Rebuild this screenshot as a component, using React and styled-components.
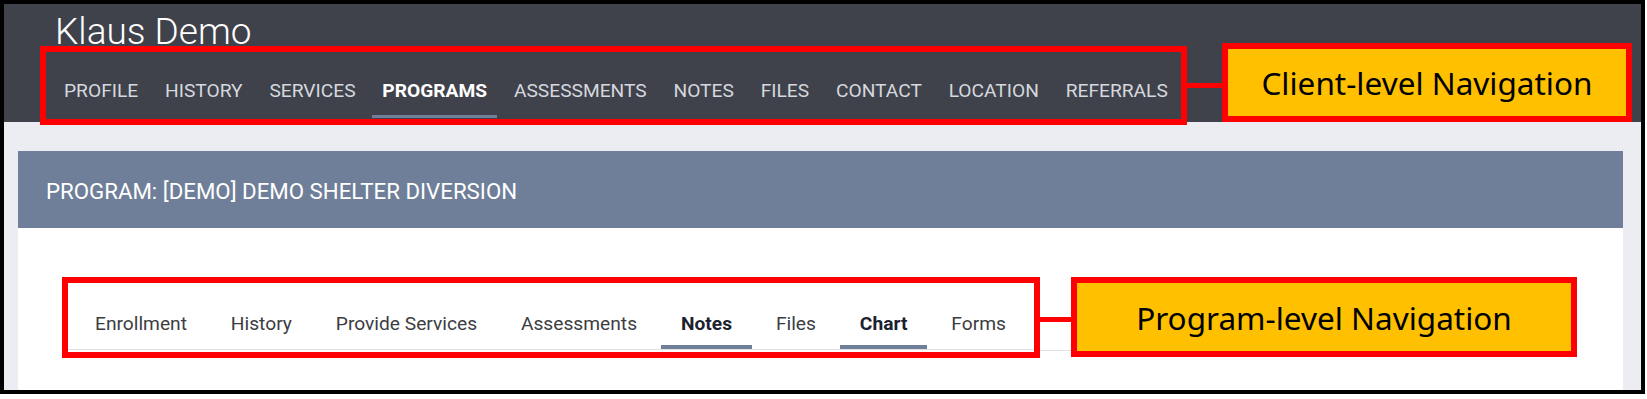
import styled, { createGlobalStyle } from "styled-components";

const GlobalStyle = createGlobalStyle`
  body {
    margin: 0;
    background: #fff;
  }
`;

const CLIENT_TABS = ["Profile", "History", "Services", "Programs", "Assessments", "Notes", "Files", "Contact", "Location", "Referrals"];
const PROGRAM_TABS = ["Enrollment", "History", "Provide Services", "Assessments", "Notes", "Files", "Chart", "Forms"];
const PROGRAM_ACTIVE = ["Notes", "Chart"];

const App = () => (
  <>
    <GlobalStyle />
    <Frame>
      <Header>
        <ClientName>Klaus Demo</ClientName>
        <CalloutRow>
          <Outline $width={1147} $height={79} $offset={3}>
            <ClientNav>
              {CLIENT_TABS.map((t) => (
                <ClientTab key={t} $active={t === "Programs"}>
                  {t}
                </ClientTab>
              ))}
            </ClientNav>
          </Outline>
          <Connector $width={35} />
          <Label $width={410} $height={79}>
            Client-level Navigation
          </Label>
        </CalloutRow>
      </Header>

      <Main>
        <Card>
          <CardHeader>Program: [DEMO] Demo Shelter Diversion</CardHeader>
          <CardBody>
            <CalloutRow>
              <Outline $width={978} $height={81}>
                <ProgramNav>
                  {PROGRAM_TABS.map((t) => (
                    <ProgramTab key={t} $active={PROGRAM_ACTIVE.includes(t)}>
                      {t}
                    </ProgramTab>
                  ))}
                </ProgramNav>
              </Outline>
              <Connector $width={31} $rule />
              <Label $width={506} $height={80}>
                Program-level Navigation
              </Label>
            </CalloutRow>
          </CardBody>
        </Card>
      </Main>
    </Frame>
  </>
);
export default App;

const Frame = styled.div`
  box-sizing: border-box;
  width: 1645px;
  height: 394px;
  border: 4px solid #000;
  background: #ecedf2;
  overflow: hidden;
  display: flex;
  flex-direction: column;
  font-family: Roboto, "Liberation Sans", sans-serif;
`;

const Header = styled.header`
  position: relative;
  z-index: 1;
  flex: none;
  height: 118px;
  padding-top: 13px;
  box-sizing: border-box;
  background: #3f424b;
  display: flex;
  flex-direction: column;
`;

const ClientName = styled.h1`
  margin: 0 0 0 51px;
  font-size: 37px;
  font-weight: 300;
  line-height: 30px;
  color: #fff;
`;

const CalloutRow = styled.div`
  display: flex;
  align-items: flex-start;

  ${Header} & {
    margin: -4px 0 0 36px;
  }
`;

const Outline = styled.div`
  box-sizing: border-box;
  flex: none;
  width: ${({ $width }) => $width}px;
  height: ${({ $height }) => $height}px;
  margin-top: ${({ $offset = 0 }) => $offset}px;
  border: 6px solid #ff0000;
  overflow: hidden;
`;

const Connector = styled.div`
  position: relative;
  flex: none;
  align-self: stretch;
  width: ${({ $width }) => $width}px;

  &::before {
    content: "";
    position: absolute;
    left: 0;
    right: 0;
    top: 50%;
    height: 5px;
    margin-top: -1px;
    background: #ff0000;
  }

  &::after {
    content: "";
    display: ${({ $rule }) => ($rule ? "block" : "none")};
    position: absolute;
    left: 0;
    right: 0;
    bottom: 7px;
    height: 1px;
    background: #dfe1e6;
  }
`;

const Label = styled.div`
  box-sizing: border-box;
  flex: none;
  width: ${({ $width }) => $width}px;
  height: ${({ $height }) => $height}px;
  border: 6px solid #ff0000;
  background: #ffc000;
  display: flex;
  align-items: center;
  justify-content: center;
  font-family: "Noto Sans", "Open Sans", sans-serif;
  font-size: 31.5px;
  color: #000;
  white-space: nowrap;
`;

const ClientNav = styled.nav`
  display: flex;
  gap: 6.8px;
  padding: 10px 0 0 8px;
`;

const ClientTab = styled.a`
  position: relative;
  flex: none;
  height: 56px;
  padding: 0 10px;
  display: flex;
  align-items: center;
  white-space: nowrap;
  font-size: 19.2px;
  text-transform: uppercase;
  font-weight: ${({ $active }) => ($active ? 700 : 400)};
  color: ${({ $active }) => ($active ? "#fff" : "#d5d8de")};

  &::after {
    content: "";
    display: ${({ $active }) => ($active ? "block" : "none")};
    position: absolute;
    left: 0;
    right: 0;
    bottom: 0;
    height: 3px;
    background: #6f7f99;
  }
`;

const Main = styled.main`
  flex: 1;
  display: flex;
  padding: 29px 18px 0 14px;
  min-height: 0;
`;

const Card = styled.section`
  flex: 1;
  display: flex;
  flex-direction: column;
  background: #fff;
`;

const CardHeader = styled.h2`
  margin: 0;
  height: 77px;
  padding: 2px 0 0 28px;
  box-sizing: border-box;
  display: flex;
  align-items: center;
  background: #6f7f99;
  color: #fff;
  font-size: 22.25px;
  font-weight: 400;
  text-transform: uppercase;
`;

const CardBody = styled.div`
  padding: 49px 0 0 44px;
`;

const ProgramNav = styled.nav`
  display: flex;
  gap: 3.9px;
  margin-top: 14px;
  padding-left: 7px;
  border-bottom: 1px solid #dfe1e6;
`;

const ProgramTab = styled.a`
  position: relative;
  flex: none;
  height: 52px;
  padding: 0 20px;
  display: flex;
  align-items: center;
  white-space: nowrap;
  font-size: 19.2px;
  font-weight: ${({ $active }) => ($active ? 700 : 400)};
  color: ${({ $active }) => ($active ? "#1c2130" : "#3b3d42")};

  &::after {
    content: "";
    display: ${({ $active }) => ($active ? "block" : "none")};
    position: absolute;
    left: 0;
    right: 0;
    bottom: 0;
    height: 4px;
    background: #6f7f99;
  }
`;
